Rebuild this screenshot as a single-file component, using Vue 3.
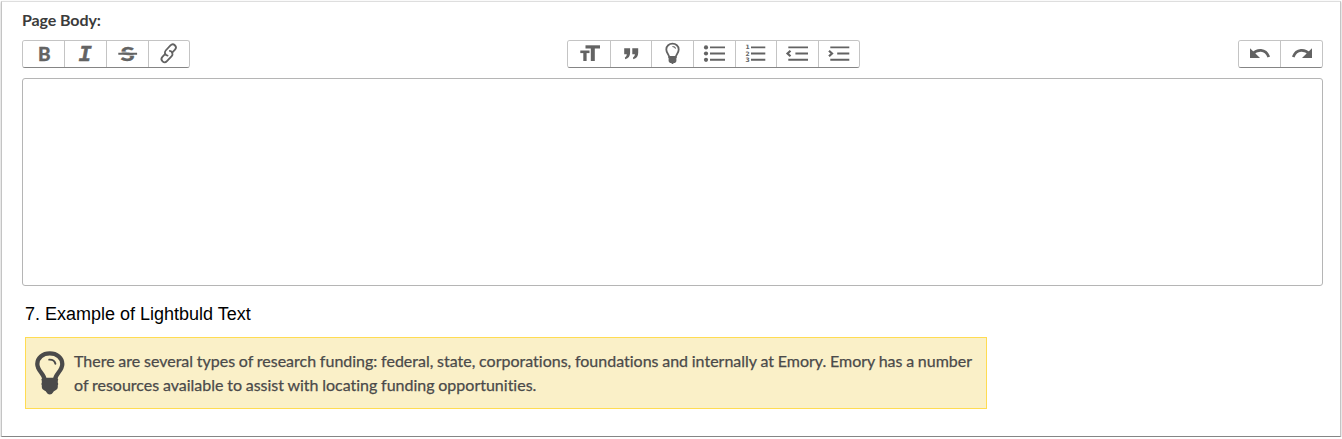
<script setup>
import { ref } from 'vue'

const body = ref('')

const groups = [
  { name: 'inline', buttons: [['bold', 42], ['italic', 42], ['strike', 42], ['link', 41]] },
  {
    name: 'block',
    buttons: [['heading', 43], ['quote', 41], ['bulb', 42], ['bullets', 42], ['numbers', 41], ['outdent', 42], ['indent', 41]],
  },
  { name: 'history', buttons: [['undo', 42], ['redo', 42]] },
].map((g) => ({ ...g, buttons: g.buttons.map(([icon, width]) => ({ icon, width })) }))
</script>

<template>
  <main class="card">
    <label class="label" for="page-body">Page Body:</label>

    <div class="toolbar">
      <div v-for="group in groups" :key="group.name" class="group" :class="group.name">
        <button
          v-for="b in group.buttons"
          :key="b.icon"
          class="btn"
          :style="{ width: b.width + 'px' }"
          type="button"
          :aria-label="b.icon"
        >
          <svg class="icon" width="41" height="26" viewBox="0 0 41 26">
            <text v-if="b.icon === 'bold'" class="glyph" x="15" y="19.6" textLength="12.6" lengthAdjust="spacingAndGlyphs">B</text>
            <text v-else-if="b.icon === 'italic'" class="glyph mono" x="13.6" y="19.6" textLength="13" lengthAdjust="spacingAndGlyphs">I</text>
            <g v-else-if="b.icon === 'strike'">
              <text class="glyph" x="13.6" y="19.7" textLength="14.2" lengthAdjust="spacingAndGlyphs">S</text>
              <path class="gap" d="M11 11.1h20M11 14.3h20" />
              <path class="line" d="M11.3 12.7h18.8" />
            </g>
            <g v-else-if="b.icon === 'link'" transform="translate(19.7 12.3) rotate(-47)" class="chain">
              <path d="M2.8 2.1H7a3.1 3.1 0 0 0 0-6.2H0a3.1 3.1 0 0 0-2.5 4.9" />
              <path d="M-2.8-2.1H-7a3.1 3.1 0 0 0 0 6.2H0a3.1 3.1 0 0 0 2.5-4.9" />
            </g>
            <g v-else-if="b.icon === 'heading'">
              <rect x="17.5" y="4.3" width="14.5" height="3.2" />
              <rect x="22.8" y="5" width="4" height="15" />
              <rect x="12.3" y="9.5" width="9.2" height="2.6" />
              <rect x="15.3" y="10" width="3.3" height="10" />
            </g>
            <g v-else-if="b.icon === 'quote'">
              <path d="M13.2 7.2h5.9v4.6q0 5-4.8 6.5l-.5-1.5q2-1 2-3.5h-2.6z" />
              <path d="M21.3 7.2h5.9v4.6q0 5-4.8 6.5l-.5-1.5q2-1 2-3.5h-2.6z" />
            </g>
            <g v-else-if="b.icon === 'bulb'" transform="translate(13.4 1.8)">
              <path class="bulb-outline" d="M3.8 14.2C3.7 11.6.9 10.3.9 6.7.9 3.2 3.8.9 7.1.9s6.2 2.3 6.2 5.8c0 3.6-2.8 4.9-2.9 7.5z" />
              <path class="bulb-shine" d="M7 3.7q2.4 0 3.3 2" />
              <path d="M3.2 14h7.8v4.5l-1.3 1.6-1.5.2-.4 1h-1.400l-.4-1-1.5-.2-1.3-1.6z" />
            </g>
            <g v-else-if="b.icon === 'bullets'">
              <circle cx="12" cy="6.4" r="2.1" /><circle cx="12" cy="12.5" r="2.1" /><circle cx="12" cy="18.8" r="2.1" />
              <path class="line" d="M16 6.4h15M16 12.5h15M16 18.8h15" />
            </g>
            <g v-else-if="b.icon === 'numbers'">
              <text class="digit" x="9.5" y="8.4">1</text>
              <text class="digit" x="9.5" y="14.6">2</text>
              <text class="digit" x="9.5" y="20.8">3</text>
              <path class="line" d="M15 6.4h14.3M15 12.5h14.3M15 18.8h14.3" />
            </g>
            <g v-else-if="b.icon === 'outdent'">
              <path class="line" d="M11.3 6.4H31M18.4 12.5H31M11.3 18.8H31" />
              <path class="chevron" d="M13.5 9.7l-3 2.8 3 2.8" />
            </g>
            <g v-else-if="b.icon === 'indent'">
              <path class="line" d="M11.3 6.4h19M18.2 12.5h12.1M11.3 18.8h19" />
              <path class="chevron" d="M10 9.7l3 2.8-3 2.8" />
            </g>
            <g v-else :transform="b.icon === 'redo' ? 'matrix(-1 0 0 1 42 0)' : null">
              <path d="M11 7.2v9.8h10z" />
              <path class="arc" d="M13.5 13C18 8.3 26.3 7.3 29.8 16" />
            </g>
          </svg>
        </button>
      </div>
    </div>

    <textarea id="page-body" v-model="body" class="editor"></textarea>

    <h2 class="caption">7. Example of Lightbuld Text</h2>

    <aside class="note">
      <svg class="note-icon" width="30" height="44" viewBox="0 0 30 44">
        <path class="note-outline" d="M9.7 29C9.2 22.5 2.3 20 2.3 13 2.3 6.7 7.8 2.3 14.8 2.3S27.3 6.7 27.3 13c0 7-6.9 9.5-7.4 16z" />
        <path class="note-shine" d="M14.2 8.6q5.3-.2 6.2 4.2" />
        <path d="M7 27.5h15.600q1.200 1 .2 2.3v2q1 1.2 0 2.4v2q0 2.500-2.600 3.200-1.600.4-2.200 2-1 2-3.200 2t-3.200-2q-.6-1.6-2.200-2-2.600-.7-2.600-3.200v-2q-1-1.2 0-2.4v-2q-1-1.3.2-2.300z" />
      </svg>
      <p class="note-text">
        <span class="row">There are several types of research funding: federal, state, corporations, foundations and internally at Emory. Emory has a number</span>
        <span class="row">of resources available to assist with locating funding opportunities.</span>
      </p>
    </aside>
  </main>
</template>

<style>
body {
  margin: 0;
  background: #fff;
  overflow: hidden;
}
</style>

<style scoped>
.card {
  box-sizing: border-box;
  width: 1340px;
  height: 436px;
  margin: 1px 0 0 1px;
  padding: 8px 17px 0 20px;
  border: 1px solid #c4c4c4;
  border-top-color: #dedede;
  border-bottom-color: #858585;
  background: #fff;
  box-shadow: 0 1px 2px rgba(0, 0, 0, 0.28);
  font-family: Lato, sans-serif;
}
.label {
  display: block;
  height: 20px;
  line-height: 20px;
  font-size: 16px;
  font-weight: 700;
  letter-spacing: -0.1px;
  color: #3b3b3b;
}
.toolbar {
  display: flex;
  justify-content: space-between;
  width: 1301px;
  height: 28px;
  margin-top: 10px;
}
.group {
  box-sizing: border-box;
  display: flex;
  height: 28px;
  border: 1px solid #c4c4c4;
  border-bottom-color: #858585;
  border-radius: 3px;
  overflow: hidden;
}
.block {
  margin-left: -1px;
}
.btn {
  box-sizing: border-box;
  flex: none;
  display: flex;
  height: 26px;
  padding: 0;
  border: 0;
  border-right: 1px solid #c4c4c4;
  background: #fff;
  overflow: hidden;
}
.btn:last-child {
  border-right: 0;
  margin-right: -1px;
}
.icon {
  flex: none;
  display: block;
  fill: #636363;
}
.glyph {
  font: 900 19px Lato, sans-serif;
  stroke: #636363;
  stroke-width: 0.3;
}
.mono {
  font: italic 700 22px 'Liberation Mono', monospace;
  stroke-width: 0.6;
}
.digit {
  font: 700 6px 'DejaVu Sans', sans-serif;
}
.line {
  fill: none;
  stroke: #636363;
  stroke-width: 1.9;
}
.gap {
  stroke: #fff;
  stroke-width: 0.8;
}
.chain {
  fill: none;
  stroke: #636363;
  stroke-width: 1.8;
  stroke-linecap: round;
}
.chevron {
  fill: none;
  stroke: #636363;
  stroke-width: 2.2;
}
.arc {
  fill: none;
  stroke: #636363;
  stroke-width: 2.8;
}
.bulb-outline {
  fill: none;
  stroke: #636363;
  stroke-width: 1.8;
}
.bulb-shine {
  fill: none;
  stroke: #636363;
  stroke-width: 1.1;
}
.editor {
  box-sizing: border-box;
  display: block;
  width: 1301px;
  height: 208px;
  margin: 10px 0 0;
  padding: 8px;
  border: 1px solid #b5b5b5;
  border-radius: 3px;
  background: #fff;
  resize: none;
  outline: none;
}
.caption {
  height: 24px;
  margin: 16px 0 0 3px;
  font: 400 18px/24px 'Liberation Sans', sans-serif;
  color: #000;
}
.note {
  box-sizing: border-box;
  display: flex;
  width: 962px;
  height: 72px;
  margin: 11px 0 0 3px;
  padding: 11px 0 0 9px;
  border: 1px solid #ffdc52;
  background: #faf0c8;
}
.note-icon {
  flex: none;
  margin-top: 2px;
  fill: #4a4a4a;
}
.note-outline {
  fill: none;
  stroke: #4a4a4a;
  stroke-width: 4.3;
}
.note-shine {
  fill: none;
  stroke: #4a4a4a;
  stroke-width: 1.9;
  stroke-linecap: round;
}
.note-text {
  margin: 0 0 0 9px;
  font-size: 16px;
  line-height: 24px;
  font-weight: 400;
  font-variant-ligatures: none;
  word-spacing: -0.37px;
  -webkit-text-stroke: 0.25px #4a4a4a;
  color: #4a4a4a;
  white-space: nowrap;
}
.row {
  display: block;
}
</style>
